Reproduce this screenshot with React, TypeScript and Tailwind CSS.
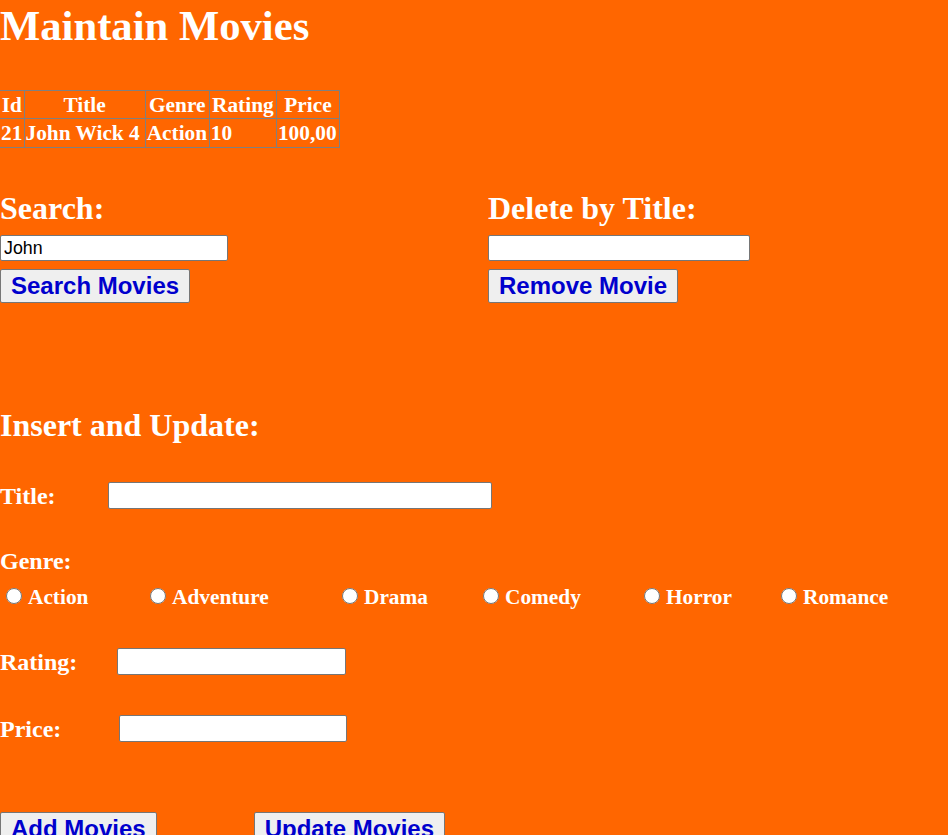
import { useState } from "react"

const movies = [{ id: 21, title: "John Wick 4", genre: "Action", rating: "10", price: "100,00" }]

const genres = [
  { name: "Action", w: "w-[144px]" },
  { name: "Adventure", w: "w-[192px]" },
  { name: "Drama", w: "w-[141px]" },
  { name: "Comedy", w: "w-[161px]" },
  { name: "Horror", w: "w-[137px]" },
  { name: "Romance", w: "w-[130px]" },
]

const btn =
  "h-[34px] px-[10px] bg-[#efefef] border border-[#767676] rounded-[2px] text-[24px] leading-[28px] font-bold text-[#0000cd] font-['Liberation_Sans',Arial,sans-serif]"
const input =
  "block h-[26px] px-[3px] bg-white border border-[#767676] rounded-[2px] text-[17.8px] font-normal text-black font-['Liberation_Sans',Arial,sans-serif] outline-none"
const cell = "border border-[#808080] px-[1px] py-0 leading-[24px]"

export default function App() {
  const [search, setSearch] = useState("John")
  const [delTitle, setDelTitle] = useState("")
  const [genre, setGenre] = useState("")

  return (
    <div className="min-h-[835px] bg-[#ff6600] text-white font-['Liberation_Serif','Times_New_Roman',serif] font-bold">
      <h1 className="pt-[1px] h-[50px] text-[42.67px] leading-[49px]">Maintain Movies</h1>

      {/* Movie list */}
      <table className="mt-[40px] border-collapse table-fixed w-[340px] text-[21.33px]">
        <thead>
          <tr className="h-[28px]">
            <th className={`${cell} border-l-0 w-[24px]`}>Id</th>
            <th className={`${cell} w-[121px]`}>Title</th>
            <th className={`${cell} w-[64px]`}>Genre</th>
            <th className={`${cell} w-[67px]`}>Rating</th>
            <th className={`${cell} w-[63px]`}>Price</th>
          </tr>
        </thead>
        <tbody>
          {movies.map((m) => (
            <tr key={m.id} className="h-[29px]">
              <td className={`${cell} border-l-0`}>{m.id}</td>
              <td className={`${cell} whitespace-nowrap`}>{m.title}</td>
              <td className={cell}>{m.genre}</td>
              <td className={cell}>{m.rating}</td>
              <td className={cell}>{m.price}</td>
            </tr>
          ))}
        </tbody>
      </table>

      {/* Search & Delete */}
      <div className="flex mt-[42px]">
        <div className="w-[488px]">
          <h2 className="text-[32px] leading-[37px]">Search:</h2>
          <input className={`${input} mt-[8px] w-[228px]`} value={search} onChange={(e) => setSearch(e.target.value)} />
          <button className={`${btn} mt-[8px]`}>Search Movies</button>
        </div>
        <div>
          <h2 className="text-[32px] leading-[37px]">Delete by Title:</h2>
          <input className={`${input} mt-[8px] w-[262px]`} value={delTitle} onChange={(e) => setDelTitle(e.target.value)} />
          <button className={`${btn} mt-[8px] block`}>Remove Movie</button>
        </div>
      </div>

      {/* Insert / Update */}
      <h2 className="mt-[104px] text-[32px] leading-[37px]">Insert and Update:</h2>

      <div className="mt-[38px] flex items-center h-[27px] text-[24px] leading-[28px]">
        <span className="w-[108px]">Title:</span>
        <input className={`${input} h-[27px] w-[384px]`} />
      </div>

      <div className="mt-[38px] text-[24px] leading-[28px]">Genre:</div>
      <div className="mt-[10px] whitespace-nowrap text-[21.33px] leading-[24px]">
        {genres.map((g) => (
          <label key={g.name} className={`inline-block ${g.w}`}>
            <input
              type="radio"
              name="genre"
              checked={genre === g.name}
              onChange={() => setGenre(g.name)}
              className="w-[16px] h-[16px] ml-[6px] mr-[6px] mt-0 mb-0 align-baseline"
            />
            {g.name}
          </label>
        ))}
      </div>

      <div className="mt-[39px] flex items-center h-[27px] text-[24px] leading-[28px]">
        <span className="w-[117px]">Rating:</span>
        <input className={`${input} h-[27px] w-[229px]`} />
      </div>

      <div className="mt-[40px] flex items-center h-[27px] text-[24px] leading-[28px]">
        <span className="w-[119px]">Price:</span>
        <input className={`${input} h-[27px] w-[228px]`} />
      </div>

      <div className="mt-[70px] flex gap-[97px]">
        <button className={btn}>Add Movies</button>
        <button className={btn}>Update Movies</button>
      </div>
    </div>
  )
}
